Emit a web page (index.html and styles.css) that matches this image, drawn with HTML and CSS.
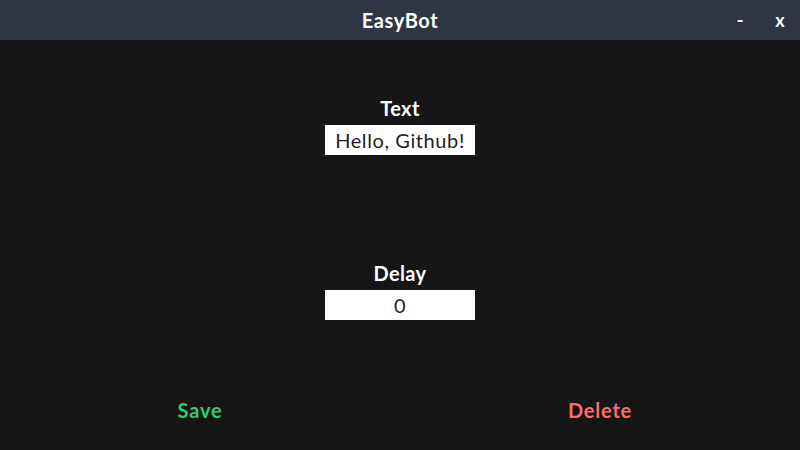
FILE: index.html
```html
<!DOCTYPE html>
<html lang="en">

<head>
  <meta charset="UTF-8" />
  <meta name="viewport" content="width=device-width, initial-scale=1.0" />
  <title>EasyBot</title>
  <link rel="stylesheet" href="styles.css">
</head>

<body>
  <div class="titlebar">
    <span class="title">EasyBot</span>
    <div class="controls">
      <span class="btn-min">-</span>
      <span class="btn-close">x</span>
    </div>
  </div>
  <div class="main">
    <div class="field">
      <label for="text">Text</label>
      <input id="text" type="text" value="Hello, Github!" />
    </div>
    <div class="field">
      <label for="delay">Delay</label>
      <input id="delay" type="text" value="0" />
    </div>
    <div class="actions">
      <span class="save">Save</span>
      <span class="delete">Delete</span>
    </div>
  </div>
</body>

</html>
```

FILE: styles.css
```css
:root {
  --bar: #2f3542;
  --bg: #161616;
  --green: #2ecc71;
  --red: #ff6b6b;
}

html,
body {
  margin: 0;
  padding: 0;
}

body {
  width: 800px;
  height: 450px;
  background-color: var(--bg);
  color: #ffffff;
  font-family: "Lato", "DejaVu Sans", sans-serif;
  overflow: hidden;
}

.titlebar {
  height: 40px;
  background-color: var(--bar);
  display: flex;
  align-items: center;
  justify-content: center;
  position: relative;
}

.title {
  font-size: 20px;
  font-weight: bold;
  letter-spacing: 0.6px;
}

.controls {
  position: absolute;
  right: 0;
  top: 0;
  height: 40px;
  display: flex;
  align-items: center;
}

.controls span {
  width: 40px;
  text-align: center;
  font-size: 18px;
  font-weight: bold;
}

.main {
  display: flex;
  flex-direction: column;
  align-items: center;
  padding-top: 56px;
}

.field {
  display: flex;
  flex-direction: column;
  align-items: center;
  gap: 5px;
  margin-bottom: 106px;
}

.field label {
  font-size: 20px;
  font-weight: bold;
  line-height: 24px;
  letter-spacing: 0.4px;
}

.field input {
  width: 150px;
  height: 30px;
  box-sizing: border-box;
  border: none;
  outline: none;
  padding: 0;
  text-align: center;
  font-family: inherit;
  font-size: 20px;
  font-weight: normal;
  letter-spacing: 0.6px;
  color: #1e1e1e;
  background-color: #ffffff;
}

.actions {
  width: 100%;
  display: flex;
  margin-top: -28px;
}

.actions span {
  flex: 1;
  text-align: center;
  font-size: 20px;
  font-weight: bold;
  line-height: 24px;
  letter-spacing: 0.8px;
}

.save {
  color: var(--green);
}

.delete {
  color: var(--red);
}
```
